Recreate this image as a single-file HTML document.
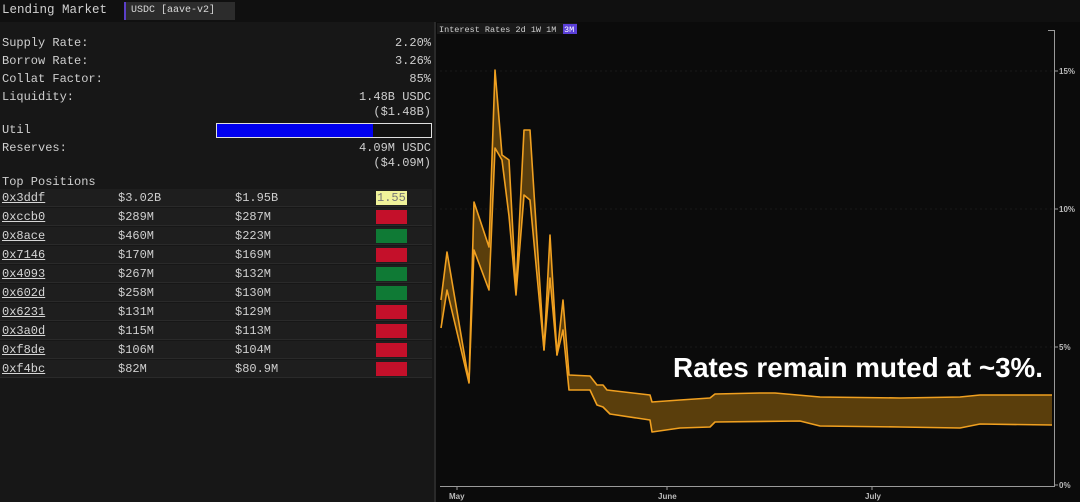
<!DOCTYPE html>
<html><head><meta charset="utf-8"><style>
*{margin:0;padding:0;box-sizing:border-box}
body{width:1080px;height:502px;background:#0c0c0c;overflow:hidden;font-family:"Liberation Mono",monospace;color:#cfcfcf;position:relative}
.top{position:absolute;left:0;top:0;width:1080px;height:22px;background:#101010}
.t{position:absolute;font-size:12px;white-space:pre;line-height:14px}
.left{position:absolute;left:0;top:22px;width:436px;height:480px;background:#171717}
.r{position:absolute;right:649px;text-align:right}
.row{position:absolute;left:0;width:432px;height:18px;background:#1e1e1e;border-bottom:1px solid #2a2a2a}
.row span{position:absolute;top:2px;font-size:12px;line-height:14px}
.row .a{left:2px;text-decoration:underline;color:#d6d6d6}
.b{left:376px;width:31px;height:14px;top:2px!important;color:transparent;font-size:11px;padding-left:1px}
</style></head><body>
<div class="top"></div>
<div class="t" style="left:2px;top:3px;font-size:12.5px;color:#d0d0d0">Lending Market</div>
<div class="t" style="left:124px;top:2px;height:18px;width:111px;background:#2c2c2c;border-left:2px solid #5b3fc8;font-size:10px;line-height:18px;padding-left:5px;color:#d8d8d8">USDC [aave-v2]</div>
<div class="left"></div>
<div class="t" style="left:2px;top:36px">Supply Rate:</div><div class="t r" style="top:36px">2.20%</div>
<div class="t" style="left:2px;top:54px">Borrow Rate:</div><div class="t r" style="top:54px">3.26%</div>
<div class="t" style="left:2px;top:72px">Collat Factor:</div><div class="t r" style="top:72px">85%</div>
<div class="t" style="left:2px;top:90px">Liquidity:</div><div class="t r" style="top:90px">1.48B USDC</div>
<div class="t r" style="top:105px">($1.48B)</div>
<div class="t" style="left:2px;top:123px">Util</div>
<div style="position:absolute;left:216px;top:123px;width:216px;height:15px;border:1px solid #e0e0e0;background:#111"><div style="width:156px;height:13px;background:#0000f0"></div></div>
<div class="t" style="left:2px;top:141px">Reserves:</div><div class="t r" style="top:141px">4.09M USDC</div>
<div class="t r" style="top:156px">($4.09M)</div>
<div class="t" style="left:2px;top:175px">Top Positions</div>

<div class="row" style="top:189px"><span class="a">0x3ddf</span><span style="left:118px">$3.02B</span><span style="left:235px">$1.95B</span><span class="b" style="background:#f0f29a;color:#777">1.55</span></div>
<div class="row" style="top:208px"><span class="a">0xccb0</span><span style="left:118px">$289M</span><span style="left:235px">$287M</span><span class="b" style="background:#c4102a">1.01</span></div>
<div class="row" style="top:227px"><span class="a">0x8ace</span><span style="left:118px">$460M</span><span style="left:235px">$223M</span><span class="b" style="background:#0f7a35">2.06</span></div>
<div class="row" style="top:246px"><span class="a">0x7146</span><span style="left:118px">$170M</span><span style="left:235px">$169M</span><span class="b" style="background:#c4102a">1.00</span></div>
<div class="row" style="top:265px"><span class="a">0x4093</span><span style="left:118px">$267M</span><span style="left:235px">$132M</span><span class="b" style="background:#0f7a35">2.03</span></div>
<div class="row" style="top:284px"><span class="a">0x602d</span><span style="left:118px">$258M</span><span style="left:235px">$130M</span><span class="b" style="background:#0f7a35">1.99</span></div>
<div class="row" style="top:303px"><span class="a">0x6231</span><span style="left:118px">$131M</span><span style="left:235px">$129M</span><span class="b" style="background:#c4102a">1.01</span></div>
<div class="row" style="top:322px"><span class="a">0x3a0d</span><span style="left:118px">$115M</span><span style="left:235px">$113M</span><span class="b" style="background:#c4102a">1.02</span></div>
<div class="row" style="top:341px"><span class="a">0xf8de</span><span style="left:118px">$106M</span><span style="left:235px">$104M</span><span class="b" style="background:#c4102a">1.02</span></div>
<div class="row" style="top:360px"><span class="a">0xf4bc</span><span style="left:118px">$82M</span><span style="left:235px">$80.9M</span><span class="b" style="background:#c4102a">1.01</span></div>

<svg style="position:absolute;left:0;top:0" width="1080" height="502">
<rect x="434" y="22" width="2" height="480" fill="#2a2a2a"/>
<rect x="436" y="22" width="644" height="480" fill="#0b0b0b"/>
<rect x="437" y="23" width="140" height="11" fill="#1a1a1a"/>
<text x="439" y="32" font-family="Liberation Mono" font-size="8.5" fill="#cfcfcf">Interest Rates 2d 1W 1M</text>
<rect x="563" y="24" width="14" height="10" fill="#5a3fd8"/>
<text x="564" y="32" font-family="Liberation Mono" font-size="8.5" fill="#fff">3M</text>
<g stroke="#1a1a1a" stroke-width="1">
<line x1="440" y1="209" x2="1054" y2="209" stroke-dasharray="2 3"/>
<line x1="440" y1="347" x2="1054" y2="347" stroke-dasharray="2 3"/>
<line x1="440" y1="71" x2="1054" y2="71" stroke-dasharray="2 3"/>
</g>
<polygon fill="#5a3e0c" points="441,300 447,252 469,382 474,202 489,247 495,70 502,155 509,160 516,290 524,130 530,130 544,350 550,235 557,355 563,300 569,375 590,376 597,385 603,385 607,390 650,395 652,402 680,400 710,398 715,394 760,393 775,393 820,397 900,398 960,397 980,395 1052,395 1052,425 980,424 960,428 900,427 820,426 800,421 715,422 710,427 680,428 652,432 650,420 610,414 603,407 597,405 590,390 569,390 563,330 557,355 550,278 544,350 530,200 524,195 516,295 509,216 502,160 495,148 489,290 474,250 469,383 447,290 441,328"/>
<g fill="none" stroke="#f0a020" stroke-width="1.6" stroke-linejoin="round">
<polyline points="441,300 447,252 469,382 474,202 489,247 495,70 502,155 509,160 516,290 524,130 530,130 544,350 550,235 557,355 563,300 569,375 590,376 597,385 603,385 607,390 650,395 652,402 680,400 710,398 715,394 760,393 775,393 820,397 900,398 960,397 980,395 1052,395"/>
<polyline points="441,328 447,290 469,383 474,250 489,290 495,148 502,160 509,216 516,295 524,195 530,200 544,350 550,278 557,355 563,330 569,390 590,390 597,405 603,407 610,414 650,420 652,432 680,428 710,427 715,422 800,421 820,426 900,427 960,428 980,424 1052,425"/>
</g>
<g stroke="#9a9a9a" stroke-width="1">
<line x1="1054.5" y1="30" x2="1054.5" y2="487"/>
<line x1="1048" y1="30.5" x2="1054" y2="30.5"/>
<line x1="1054" y1="71" x2="1058" y2="71"/><line x1="1054" y1="209" x2="1058" y2="209"/><line x1="1054" y1="347" x2="1058" y2="347"/><line x1="1054" y1="485" x2="1058" y2="485"/>
<line x1="440" y1="486.5" x2="1054" y2="486.5"/>
<line x1="457" y1="486" x2="457" y2="490"/><line x1="667" y1="486" x2="667" y2="490"/><line x1="872" y1="486" x2="872" y2="490"/>
</g>
<g font-family="Liberation Sans" font-size="8" fill="#bbb" font-weight="bold">
<text x="1059" y="74">15%</text><text x="1059" y="212">10%</text><text x="1059" y="350">5%</text><text x="1059" y="488">0%</text>
<text x="449" y="499">May</text><text x="658" y="499">June</text><text x="865" y="499">July</text>
</g>
<text x="673" y="377" font-family="Liberation Sans" font-size="28" font-weight="bold" fill="#fff" textLength="370" lengthAdjust="spacingAndGlyphs">Rates remain muted at ~3%.</text>
</svg>
</body></html>
